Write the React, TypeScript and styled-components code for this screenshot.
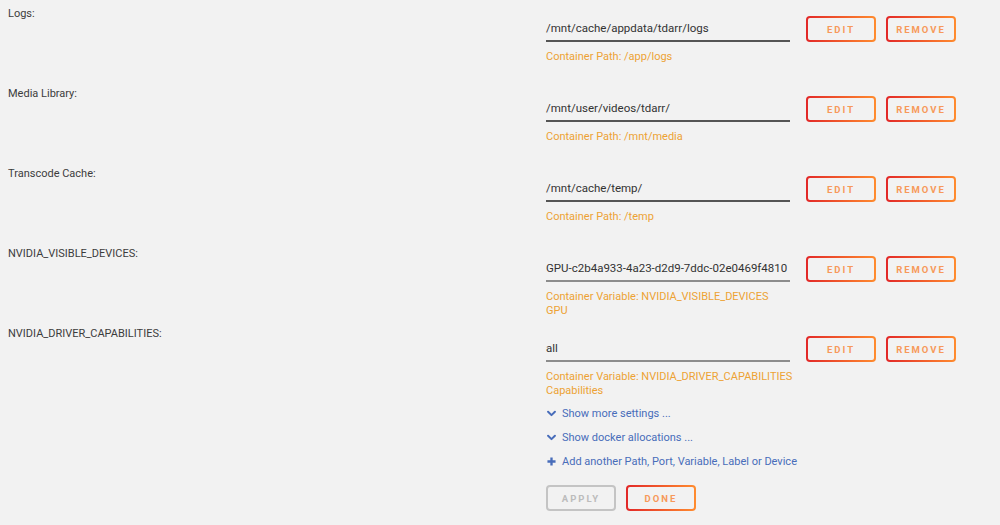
import React from 'react';
import styled, { createGlobalStyle, css } from 'styled-components';

const GlobalStyle = createGlobalStyle`
  body {
    margin: 0;
    background: #f2f2f2;
    font-family: Roboto, "Liberation Sans", sans-serif;
    color: #3a3a3a;
  }
`;

const Page = styled.div`
  padding: 0 8px;
  width: 1000px;
  box-sizing: border-box;
`;

const Row = styled.div`
  display: grid;
  grid-template-columns: 538px 244px auto;
  height: 80px;
`;

const Label = styled.div`
  padding-top: 2px;
  font-size: 11px;
  line-height: 24px;
  color: #3c3c3c;
`;

const Field = styled.div`
  padding-top: 16px;
  min-width: 0;
`;

const Value = styled.div<{ $muted?: boolean }>`
  height: 24px;
  line-height: 24px;
  font-size: 11.5px;
  color: #333;
  border-bottom: 2px solid ${(p) => (p.$muted ? '#8c8c8c' : '#555')};
  white-space: nowrap;
`;

const Hint = styled.div`
  margin-top: 8px;
  font-size: 11px;
  line-height: 14px;
  color: #eda234;
  white-space: nowrap;
`;

const Actions = styled.div`
  padding: 16px 0 0 16px;
  display: flex;
  gap: 10px;
  align-items: flex-start;
`;

const Button = styled.button<{ $disabled?: boolean }>`
  width: 70px;
  height: 26px;
  box-sizing: border-box;
  padding: 0;
  border-radius: 4px;
  font-family: Roboto, "Liberation Sans", sans-serif;
  font-size: 9.5px;
  font-weight: 700;
  letter-spacing: 2px;
  text-transform: uppercase;
  cursor: pointer;
  ${(p) =>
    p.$disabled
      ? css`
          border: 2px solid #c4c4c4;
          background: #f2f2f2;
          color: #bcbcbc;
        `
      : css`
          border: 2px solid transparent;
          background: linear-gradient(#f2f2f2, #f2f2f2) padding-box,
            linear-gradient(90deg, #e22828, #ff8c2f) border-box;
          color: #f7995a;
        `}
`;

const Links = styled.div`
  margin-left: 539px;
  padding-top: 1px;
  display: flex;
  flex-direction: column;
`;

const LinkRow = styled.a`
  display: flex;
  align-items: center;
  gap: 6px;
  height: 24px;
  font-size: 11px;
  color: #486dba;
  text-decoration: none;
  cursor: pointer;
`;

const Icon = styled.svg`
  width: 9px;
  height: 9px;
  flex-shrink: 0;
  color: #486dba;
`;

const Footer = styled.div`
  margin-left: 538px;
  padding-top: 12px;
  display: flex;
  gap: 10px;
`;

type Entry = { label: string; value: string; hint: string[]; muted?: boolean };

const entries: Entry[] = [
  { label: 'Logs:', value: '/mnt/cache/appdata/tdarr/logs', hint: ['Container Path: /app/logs'] },
  { label: 'Media Library:', value: '/mnt/user/videos/tdarr/', hint: ['Container Path: /mnt/media'] },
  { label: 'Transcode Cache:', value: '/mnt/cache/temp/', hint: ['Container Path: /temp'] },
  {
    label: 'NVIDIA_VISIBLE_DEVICES:',
    value: 'GPU-c2b4a933-4a23-d2d9-7ddc-02e0469f4810',
    hint: ['Container Variable: NVIDIA_VISIBLE_DEVICES', 'GPU'],
    muted: true,
  },
  {
    label: 'NVIDIA_DRIVER_CAPABILITIES:',
    value: 'all',
    hint: ['Container Variable: NVIDIA_DRIVER_CAPABILITIES', 'Capabilities'],
    muted: true,
  },
];

const Chevron = () => (
  <Icon viewBox="0 0 10 10">
    <path d="M1.2 3 L5 6.8 L8.8 3" fill="none" stroke="currentColor" strokeWidth="2.2" strokeLinecap="round" strokeLinejoin="round" />
  </Icon>
);

const Plus = () => (
  <Icon viewBox="0 0 10 10">
    <path d="M5 0.5 V9.5 M0.5 5 H9.5" fill="none" stroke="currentColor" strokeWidth="2.6" />
  </Icon>
);

export default function App() {
  return (
    <Page>
      <GlobalStyle />
      {entries.map((e) => (
        <Row key={e.label}>
          <Label>{e.label}</Label>
          <Field>
            <Value $muted={e.muted}>{e.value}</Value>
            <Hint>
              {e.hint.map((h) => (
                <div key={h}>{h}</div>
              ))}
            </Hint>
          </Field>
          <Actions>
            <Button>Edit</Button>
            <Button>Remove</Button>
          </Actions>
        </Row>
      ))}
      <Links>
        <LinkRow>
          <Chevron />
          Show more settings ...
        </LinkRow>
        <LinkRow>
          <Chevron />
          Show docker allocations ...
        </LinkRow>
        <LinkRow>
          <Plus />
          Add another Path, Port, Variable, Label or Device
        </LinkRow>
      </Links>
      <Footer>
        <Button $disabled>Apply</Button>
        <Button>Done</Button>
      </Footer>
    </Page>
  );
}
